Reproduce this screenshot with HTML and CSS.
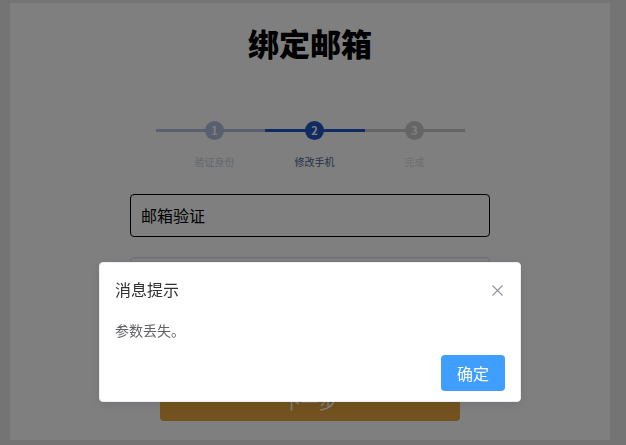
FILE: index.html
```html
<!DOCTYPE html>
<html lang="zh-CN">
<head>
    <meta charset="UTF-8">
    <meta name="viewport" content="width=device-width, initial-scale=1.0">
    <title>绑定邮箱</title>
    <link rel="stylesheet" href="styles.css">
</head>
<body>
    <div class="card">
        <h1>绑定邮箱</h1>
        <div class="steps">
            <div class="step done">
                <div class="dot">1</div>
                <div class="label">验证身份</div>
            </div>
            <div class="step active">
                <div class="dot">2</div>
                <div class="label">修改手机</div>
            </div>
            <div class="step">
                <div class="dot">3</div>
                <div class="label">完成</div>
            </div>
        </div>
        <div class="form">
            <div class="field focus">邮箱验证</div>
            <div class="field"></div>
            <button class="next-btn">下一步</button>
        </div>
    </div>

    <div class="modal-mask"></div>
    <div class="msg-box">
        <div class="msg-header">
            <span class="msg-title">消息提示</span>
            <span class="msg-close">
                <svg width="11" height="11" viewBox="0 0 11 11"><path d="M0.5 0.5L10.5 10.5M10.5 0.5L0.5 10.5" stroke="#909399" stroke-width="1.1" fill="none"/></svg>
            </span>
        </div>
        <div class="msg-content">参数丢失。</div>
        <div class="msg-btns">
            <button class="ok-btn">确定</button>
        </div>
    </div>
</body>
</html>
```
FILE: styles.css
```css
body {
    margin: 0;
    padding: 3px 0 0 10px;
    background: #e8e8e8;
    font-family: "Noto Sans CJK SC", "Noto Sans", sans-serif;
    overflow: hidden;
    height: 445px;
    box-sizing: border-box;
}
.card {
    width: 600px;
    height: 437px;
    background: #fff;
    padding-top: 25px;
    box-sizing: border-box;
}
.card h1 {
    margin: 0;
    font-size: 31px;
    line-height: 30px;
    font-weight: 900;
    text-align: center;
    color: #000;
}
.steps {
    display: flex;
    width: 309px;
    margin: 63px auto 0;
}
.step {
    width: 100px;
    position: relative;
    display: flex;
    flex-direction: column;
    align-items: center;
    --c: #cacaca;
}
.step:first-child {
    padding-left: 9px;
}
.step::before {
    content: "";
    position: absolute;
    left: 0;
    right: 0;
    top: 8px;
    height: 3px;
    background: var(--c);
}
.step.done {
    --c: #b0bedc;
}
.step.active {
    --c: #1f56c4;
}
.dot {
    position: relative;
    width: 19px;
    height: 19px;
    border-radius: 50%;
    background: var(--c);
    color: #fff;
    font-size: 11px;
    font-weight: bold;
    line-height: 19px;
    text-align: center;
}
.label {
    margin-top: 16px;
    font-size: 10px;
    line-height: 12px;
    color: #dcdcdc;
}
.step.done .label {
    color: #c8d0e0;
}
.step.active .label {
    color: #4a6496;
}
.form {
    width: 360px;
    margin: 26px auto 0;
    display: flex;
    flex-direction: column;
    align-items: center;
}
.field {
    width: 100%;
    height: 43px;
    box-sizing: border-box;
    border: 1px solid #dcdfe6;
    border-radius: 4px;
    padding: 0 10px;
    font-size: 16px;
    line-height: 41px;
    color: #000;
    margin-bottom: 20px;
}
.field.focus {
    border-color: #000;
}
.next-btn {
    width: 300px;
    height: 41px;
    margin-top: 60px;
    border: none;
    border-radius: 4px;
    background: #e6a43e;
    color: #fff;
    font-family: inherit;
    font-size: 18px;
}
.modal-mask {
    position: fixed;
    top: 0;
    left: 0;
    right: 0;
    bottom: 0;
    background: rgba(0, 0, 0, 0.5);
}
.msg-box {
    position: fixed;
    left: 99px;
    top: 262px;
    width: 422px;
    box-sizing: border-box;
    background: #fff;
    border: 1px solid #ebeef5;
    border-radius: 4px;
    box-shadow: 0 2px 12px rgba(0, 0, 0, 0.1);
    padding-bottom: 10px;
}
.msg-header {
    position: relative;
    padding: 18px 15px 0;
}
.msg-title {
    display: block;
    font-size: 16px;
    line-height: 16px;
    color: #303133;
}
.msg-close {
    position: absolute;
    top: 22px;
    right: 17px;
    width: 11px;
    height: 11px;
    display: flex;
}
.msg-content {
    margin-top: 21px;
    padding: 0 15px;
    font-size: 14px;
    line-height: 24px;
    color: #606266;
}
.msg-btns {
    margin-top: 13px;
    padding: 0 15px;
    display: flex;
    justify-content: flex-end;
}
.ok-btn {
    width: 64px;
    height: 36px;
    border: none;
    border-radius: 4px;
    background: #409eff;
    color: #fff;
    font-family: inherit;
    font-size: 16px;
    padding: 0;
}
```
